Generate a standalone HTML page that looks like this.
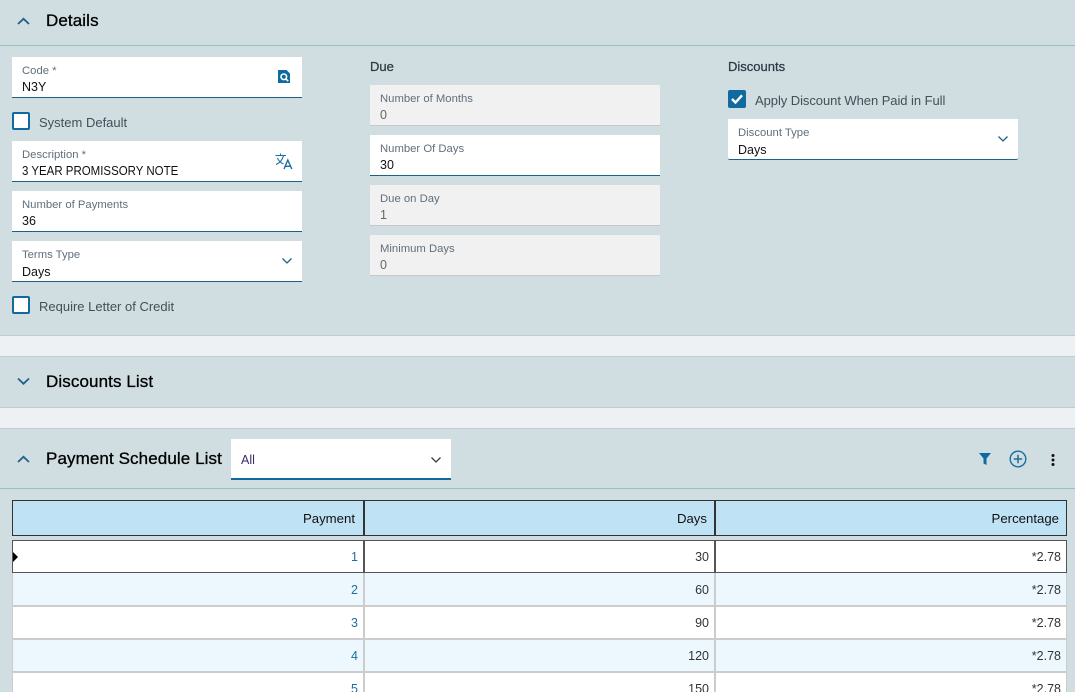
<!DOCTYPE html>
<html><head><meta charset="utf-8"><style>
html,body{margin:0;padding:0;width:1075px;height:692px;overflow:hidden}
#r{position:relative;width:1075px;height:692px;overflow:hidden;background:#d0dde1;font-family:"Liberation Sans",sans-serif;color:#000}
.a{position:absolute;white-space:nowrap}
.f{position:absolute;background:#fff;width:290px;height:40px;border-bottom:1px solid #1f5f86}
.f.d{background:#f1f1f1;border-bottom:1px solid #c4c9ca}
.f .l{position:absolute;left:10px;top:7px;font-size:11.3px;line-height:14px;color:#5f6f7c;white-space:nowrap}
.f .v{position:absolute;left:10px;top:23px;font-size:12.5px;line-height:15px;color:#111;white-space:nowrap}
.f.d .v{color:#666}
.h{font-size:17px;letter-spacing:.1px;color:#000;-webkit-text-stroke:.3px #000;line-height:20px}
.s{font-size:13px;line-height:16px;color:#444f58}
.b{font-size:13px;line-height:16px;color:#2d3a44;-webkit-text-stroke:.25px #2d3a44}
.cb{position:absolute;box-sizing:border-box;width:18px;height:18px;border:2px solid #116a9f;border-radius:2px;background:#fff}
.bar{position:absolute;left:0;width:1075px;background:#edf1f3;border-top:1px solid #bfcbcf;border-bottom:1px solid #bfcbcf;box-sizing:border-box}
.hb{position:absolute;left:12px;top:500px;width:1055px;height:36px;box-sizing:border-box;background:#c0e2f5;border-top:1.5px solid #333;border-bottom:1.5px solid #333}
.th{position:absolute;top:501px;height:35px;font-size:13.2px;line-height:35px;text-align:right;color:#111}
.c{position:absolute;box-sizing:border-box;font-size:12.5px;line-height:15px;text-align:right;padding-right:7px;color:#333}
.c.p{color:#1d6f9f;padding-right:6px}
</style></head><body><div id="r">
<div class="a" style="left:0;top:45px;width:1075px;height:1px;background:#9dbdc8"></div>
<svg class="a" style="left:16px;top:15px" width="15" height="12" viewBox="0 0 15 12"><path d="M2 9 L7.500 3.800 L13 9" fill="none" stroke="#1f6388" stroke-width="1.800"/></svg>
<div class="a h" style="left:46px;top:11px">Details</div>

<div class="f" style="left:12px;top:57px"><div class="l">Code *</div><div class="v">N3Y</div>
<svg style="position:absolute;left:265px;top:12px" width="14" height="15" viewBox="0 0 14 15"><path d="M1 1 H9.500 L13 4.500 V14 H1 Z" fill="#0f6a9f"/><circle cx="6.800" cy="7.800" r="2.800" fill="none" stroke="#fff" stroke-width="1.600"/><path d="M8.800 9.800 L11.200 12.200" stroke="#fff" stroke-width="1.600"/></svg></div>
<div class="cb" style="left:12px;top:112px"></div>
<div class="a s" style="left:39px;top:115px">System Default</div>
<div class="f" style="left:12px;top:141px"><div class="l">Description *</div><div class="v" style="transform:scaleX(.918);transform-origin:left">3 YEAR PROMISSORY NOTE</div>
<svg style="position:absolute;left:263px;top:12px" width="18" height="17" viewBox="0 0 18 17"><path d="M.5 2.500 H11 M5.500 .5 V2.500 M8.500 2.500 C7.500 7 4.500 10 1 11.500 M2.500 5 C3.500 8 6 10 8.500 11" fill="none" stroke="#1a6f9f" stroke-width="1.100"/><path d="M9 16 L12.800 7 L16.800 16 M10.300 13.300 H15.600" fill="none" stroke="#1a6f9f" stroke-width="1.400"/></svg></div>
<div class="f" style="left:12px;top:191px"><div class="l">Number of Payments</div><div class="v">36</div></div>
<div class="f" style="left:12px;top:241px"><div class="l">Terms Type</div><div class="v" style="top:24px">Days</div>
<svg style="position:absolute;left:269px;top:16px" width="12" height="8" viewBox="0 0 12 8"><path d="M1.500 1.500 L6 6 L10.500 1.500" fill="none" stroke="#1f6388" stroke-width="1.300"/></svg></div>
<div class="cb" style="left:12px;top:296px"></div>
<div class="a s" style="left:39px;top:299px">Require Letter of Credit</div>

<div class="a b" style="left:370px;top:59px">Due</div>
<div class="f d" style="left:370px;top:85px"><div class="l">Number of Months</div><div class="v">0</div></div>
<div class="f" style="left:370px;top:135px"><div class="l">Number Of Days</div><div class="v">30</div></div>
<div class="f d" style="left:370px;top:185px"><div class="l">Due on Day</div><div class="v">1</div></div>
<div class="f d" style="left:370px;top:235px"><div class="l">Minimum Days</div><div class="v">0</div></div>

<div class="a b" style="left:728px;top:59px">Discounts</div>
<div class="cb" style="left:728px;top:90px;background:#116a9f"><svg style="position:absolute;left:0;top:0" width="14" height="14" viewBox="0 0 14 14"><path d="M2 7 L5.500 10.500 L12 3.300" fill="none" stroke="#fff" stroke-width="2.400"/></svg></div>
<div class="a s" style="left:755px;top:93px;letter-spacing:-.06px">Apply Discount When Paid in Full</div>
<div class="f" style="left:728px;top:119px;border-radius:0 0 2px 2px"><div class="l">Discount Type</div><div class="v" style="top:24px">Days</div>
<svg style="position:absolute;left:269px;top:16px" width="12" height="8" viewBox="0 0 12 8"><path d="M1.500 1.500 L6 6 L10.500 1.500" fill="none" stroke="#1f6388" stroke-width="1.300"/></svg></div>

<div class="bar" style="top:335px;height:22px"></div>
<svg class="a" style="left:16px;top:376px" width="15" height="12" viewBox="0 0 15 12"><path d="M2 2.500 L7.500 7.700 L13 2.500" fill="none" stroke="#1f6388" stroke-width="1.800"/></svg>
<div class="a h" style="left:46px;top:372px">Discounts List</div>
<div class="bar" style="top:407px;height:22px"></div>

<svg class="a" style="left:16px;top:453px" width="15" height="12" viewBox="0 0 15 12"><path d="M2 9 L7.500 3.800 L13 9" fill="none" stroke="#1f6388" stroke-width="1.800"/></svg>
<div class="a h" style="left:46px;top:449px">Payment Schedule List</div>
<div class="a" style="left:231px;top:439px;width:220px;height:39px;background:#fff;border-bottom:2px solid #116a9f">
<div class="a" style="left:10px;top:14px;font-size:12.500px;line-height:15px;color:#3a2a6a">All</div>
<svg style="position:absolute;left:199px;top:17px" width="12" height="8" viewBox="0 0 12 8"><path d="M1.500 1.500 L6 6 L10.500 1.500" fill="none" stroke="#333f48" stroke-width="1.300"/></svg></div>
<svg class="a" style="left:978px;top:452px" width="14" height="14" viewBox="0 0 14 14"><path d="M1 1 H13 L8.500 6.500 V13 L5.500 11.500 V6.500 Z" fill="#0f6a9f"/></svg>
<svg class="a" style="left:1009px;top:450px" width="18" height="18" viewBox="0 0 18 18"><circle cx="9" cy="9" r="7.800" fill="none" stroke="#1a6f9f" stroke-width="1.400"/><path d="M9 4.800 V13.200 M4.800 9 H13.200" stroke="#1a6f9f" stroke-width="1.500"/></svg>
<svg class="a" style="left:1050px;top:452px" width="6" height="16" viewBox="0 0 6 16"><circle cx="3" cy="3.500" r="1.500" fill="#111"/><circle cx="3" cy="8" r="1.500" fill="#111"/><circle cx="3" cy="12.500" r="1.500" fill="#111"/></svg>
<div class="a" style="left:0;top:488px;width:1075px;height:1px;background:#9dbdc8"></div>

<div class="hb"></div>
<div class="th" style="left:12px;width:343px">Payment</div>
<div class="th" style="left:364px;width:343px">Days</div>
<div class="th" style="left:716px;width:343px">Percentage</div>
<div class="a" style="left:12px;top:500px;width:1px;height:36px;background:#333"></div>
<div class="a" style="left:363px;top:500px;width:2px;height:36px;background:#333"></div>
<div class="a" style="left:714px;top:500px;width:2px;height:36px;background:#333"></div>
<div class="a" style="left:1066px;top:500px;width:1px;height:36px;background:#333"></div>

<div class="a" style="left:12px;top:540px;width:1055px;height:33px;background:#fff;border:1.500px solid #555;box-sizing:border-box"></div>
<div class="a" style="left:363px;top:540px;width:2px;height:33px;background:#555"></div>
<div class="a" style="left:714px;top:540px;width:2px;height:33px;background:#555"></div>
<div class="a" style="left:13px;top:552px;width:0;height:0;border-left:5px solid #000;border-top:5px solid transparent;border-bottom:5px solid transparent"></div>

<div class="a" style="left:13px;top:573px;width:1053px;height:33px;background:#ecf8fe"></div>
<div class="a" style="left:13px;top:606px;width:1053px;height:33px;background:#fff"></div>
<div class="a" style="left:13px;top:639px;width:1053px;height:33px;background:#ecf8fe"></div>
<div class="a" style="left:13px;top:672px;width:1053px;height:20px;background:#fff"></div>
<div class="a" style="left:12px;top:605px;width:1055px;height:2px;background:#ccc"></div>
<div class="a" style="left:12px;top:638px;width:1055px;height:2px;background:#ccc"></div>
<div class="a" style="left:12px;top:671px;width:1055px;height:2px;background:#ccc"></div>
<div class="a" style="left:12px;top:573px;width:1px;height:119px;background:#ccc"></div>
<div class="a" style="left:363px;top:573px;width:2px;height:119px;background:#ccc"></div>
<div class="a" style="left:714px;top:573px;width:2px;height:119px;background:#ccc"></div>
<div class="a" style="left:1066px;top:573px;width:1px;height:119px;background:#ccc"></div>

<div class="c p" style="left:13px;top:550px;width:351px">1</div><div class="c" style="left:365px;top:550px;width:351px">30</div><div class="c" style="left:717px;top:550px;width:351px">*2.78</div>
<div class="c p" style="left:13px;top:583px;width:351px">2</div><div class="c" style="left:365px;top:583px;width:351px">60</div><div class="c" style="left:717px;top:583px;width:351px">*2.78</div>
<div class="c p" style="left:13px;top:616px;width:351px">3</div><div class="c" style="left:365px;top:616px;width:351px">90</div><div class="c" style="left:717px;top:616px;width:351px">*2.78</div>
<div class="c p" style="left:13px;top:649px;width:351px">4</div><div class="c" style="left:365px;top:649px;width:351px">120</div><div class="c" style="left:717px;top:649px;width:351px">*2.78</div>
<div class="c p" style="left:13px;top:682px;width:351px">5</div><div class="c" style="left:365px;top:682px;width:351px">150</div><div class="c" style="left:717px;top:682px;width:351px">*2.78</div>
</div></body></html>
